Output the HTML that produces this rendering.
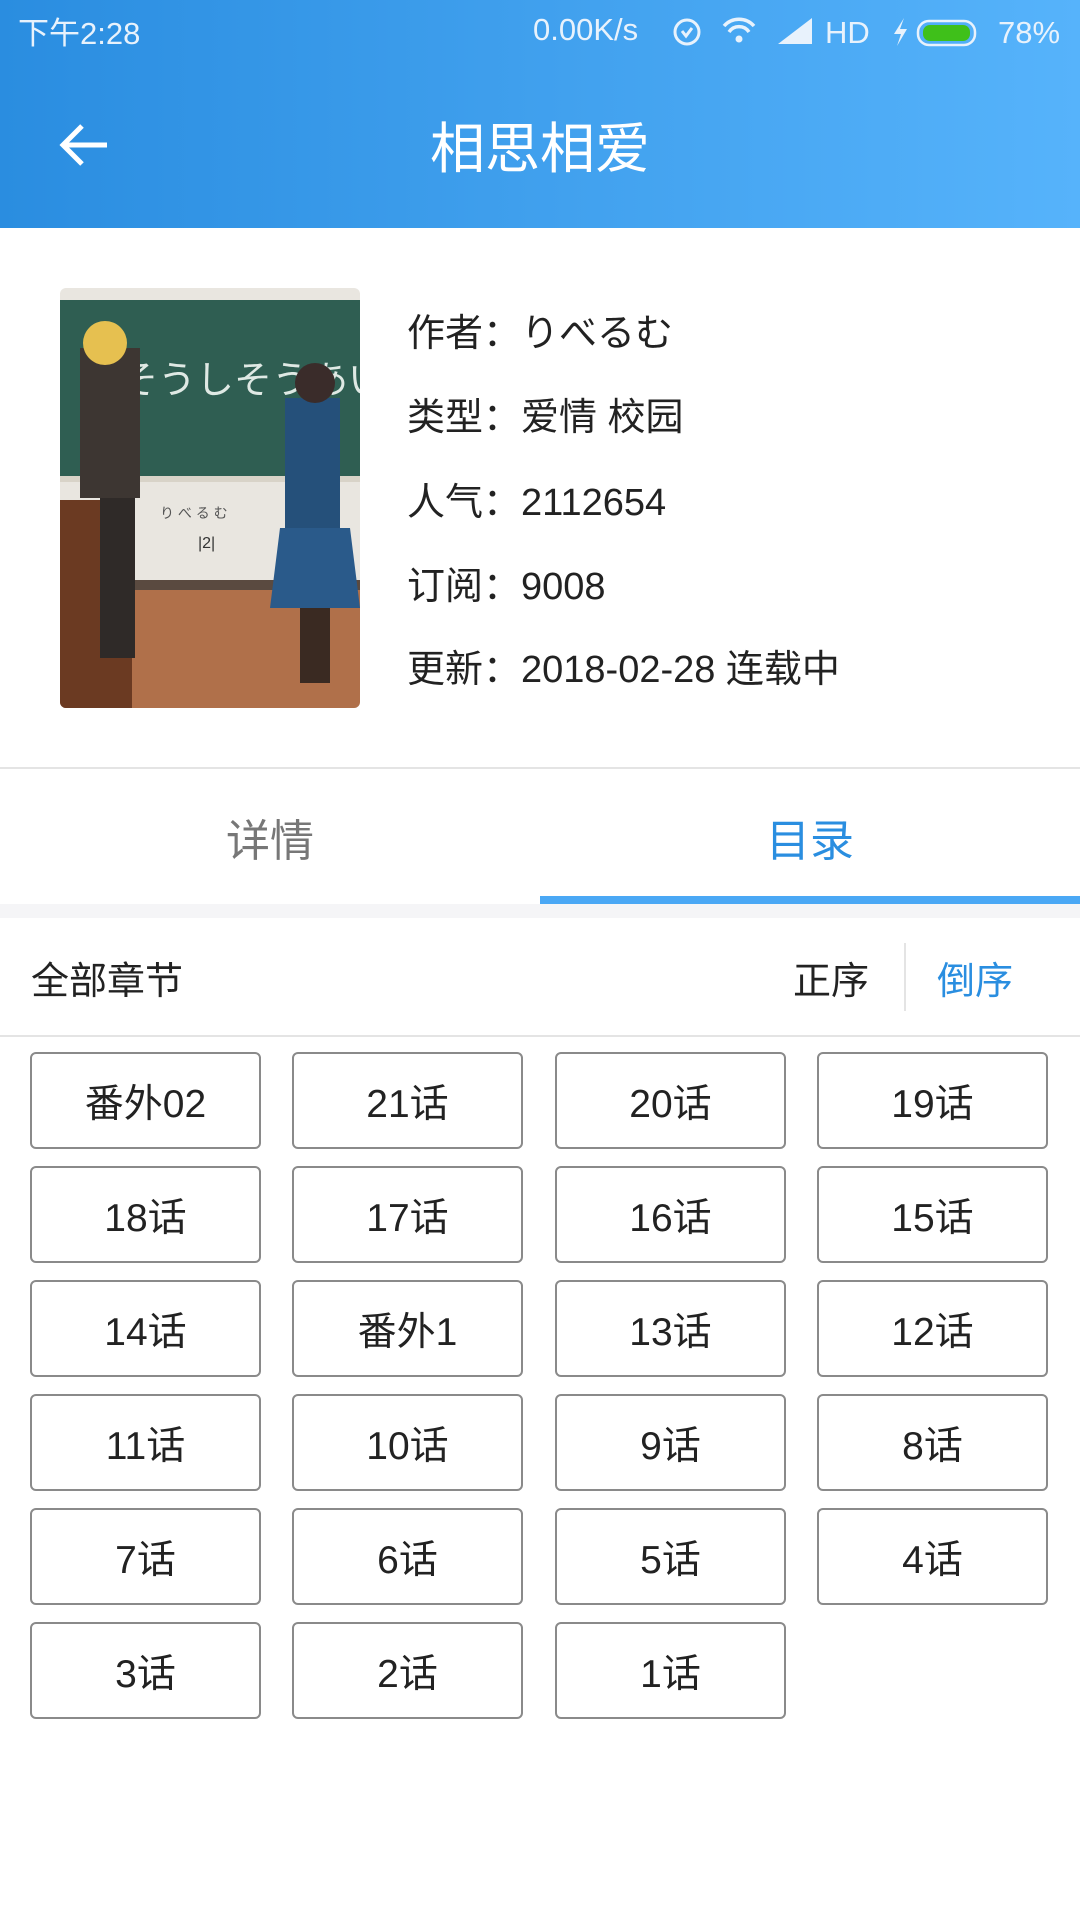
<!DOCTYPE html>
<html><head><meta charset="utf-8"><style>
*{margin:0;padding:0;box-sizing:border-box}
body{width:1080px;height:1920px;background:#fff;font-family:"Liberation Sans","Noto Sans CJK SC",sans-serif;position:relative;overflow:hidden;color:#222}
.hdr{position:absolute;left:0;top:0;width:1080px;height:228px;background:linear-gradient(90deg,#2a8de0,#56b3fb)}
.abs{position:absolute;white-space:nowrap}
.info{left:407px;font-size:38px;color:#222}
.btn{position:absolute;width:231px;height:97px;border:2px solid #8a8a8a;border-radius:6px;font-size:39px;display:flex;align-items:center;justify-content:center;color:#222}
</style></head><body>
<div class="hdr"></div>
<div class="abs" style="left:18px;top:8px;font-size:31px;color:#e8f2fc">下午2:28</div>
<div class="abs" style="left:533px;top:12px;font-size:31px;color:#e8f2fc">0.00K/s</div>
<svg class="abs" style="left:668px;top:12px" width="400" height="40" viewBox="0 0 400 40">
<circle cx="19" cy="20" r="12" fill="none" stroke="#e8f2fc" stroke-width="3"/><path d="M14 19l4 5 6-8" stroke="#e8f2fc" stroke-width="3" fill="none"/>
<path d="M56 14a20 20 0 0 1 30 0M61 20a12 12 0 0 1 20 0" stroke="#e8f2fc" stroke-width="3.5" fill="none"/><circle cx="71" cy="27" r="3.5" fill="#e8f2fc"/>
<path d="M110 32h34V6z" fill="#e8f2fc"/>
<text x="157" y="31" font-size="31" fill="#e8f2fc" font-family="Liberation Sans">HD</text>
<path d="M236 6l-10 16h7l-4 12 10-17h-7z" fill="#e8f2fc"/>
<rect x="250" y="9" width="57" height="24" rx="11" fill="none" stroke="#e8f2fc" stroke-width="2.5"/><rect x="255" y="13" width="47" height="16" rx="7" fill="#3fc01a"/>
<text x="330" y="31" font-size="31" fill="#e8f2fc" font-family="Liberation Sans">78%</text>
</svg>
<svg class="abs" style="left:58px;top:122px" width="52" height="46" viewBox="0 0 52 46"><path d="M24 4L5 23l19 19M5 23h44" stroke="#fff" stroke-width="5" fill="none"/></svg>
<div class="abs" style="left:0;width:1080px;text-align:center;top:104px;font-size:55px;color:#fff">相思相爱</div>

<svg class="abs" style="left:60px;top:288px;border-radius:6px" width="300" height="420" viewBox="0 0 300 420">
<rect width="300" height="420" fill="#e9e6e0"/>
<rect x="0" y="12" width="300" height="178" fill="#2f5e52"/>
<rect x="0" y="188" width="300" height="6" fill="#d8d3c8"/>
<rect x="0" y="300" width="300" height="120" fill="#b0704a"/>
<rect x="0" y="292" width="300" height="10" fill="#5a4a40"/>
<text x="60" y="105" font-size="38" fill="#dfe9e4" font-family="Noto Sans CJK JP">そうしそうあい</text>
<rect x="0" y="212" width="72" height="208" fill="#6b3a22"/>
<rect x="20" y="60" width="60" height="150" fill="#3d3632"/>
<rect x="40" y="210" width="35" height="160" fill="#2f2a28"/>
<circle cx="45" cy="55" r="22" fill="#e6c050"/>
<rect x="225" y="110" width="55" height="140" fill="#25507a"/>
<path d="M220 240h70l10 80h-90z" fill="#2a5a8a"/>
<circle cx="255" cy="95" r="20" fill="#3a2c2a"/>
<rect x="240" y="320" width="30" height="75" fill="#3a2a22"/>
<text x="100" y="230" font-size="14" fill="#555">り べ る む</text>
<text x="138" y="260" font-size="16" fill="#333">|2|</text>
</svg>

<div class="abs info" style="top:302px">作者：りべるむ</div>
<div class="abs info" style="top:386px">类型：爱情 校园</div>
<div class="abs info" style="top:471px">人气：2112654</div>
<div class="abs info" style="top:555px">订阅：9008</div>
<div class="abs info" style="top:638px">更新：2018-02-28 连载中</div>

<div class="abs" style="left:0;top:767px;width:1080px;height:2px;background:#e4e4e4"></div>
<div class="abs" style="left:0;width:540px;text-align:center;top:805px;font-size:44px;color:#777">详情</div>
<div class="abs" style="left:540px;width:540px;text-align:center;top:805px;font-size:44px;color:#2a8ee0">目录</div>
<div class="abs" style="left:540px;top:896px;width:540px;height:8px;background:#4aa8f5"></div>
<div class="abs" style="left:0;top:904px;width:1080px;height:14px;background:#f5f5f7"></div>

<div class="abs" style="left:31px;top:950px;font-size:38px">全部章节</div>
<div class="abs" style="left:793px;top:950px;font-size:38px">正序</div>
<div class="abs" style="left:904px;top:943px;width:2px;height:68px;background:#e4e4e4"></div>
<div class="abs" style="left:937px;top:950px;font-size:38px;color:#2a8ee0">倒序</div>
<div class="abs" style="left:0;top:1035px;width:1080px;height:2px;background:#e4e4e4"></div>

<div class="btn" style="left:30px;top:1052px">番外02</div>
<div class="btn" style="left:292px;top:1052px">21话</div>
<div class="btn" style="left:555px;top:1052px">20话</div>
<div class="btn" style="left:817px;top:1052px">19话</div>
<div class="btn" style="left:30px;top:1166px">18话</div>
<div class="btn" style="left:292px;top:1166px">17话</div>
<div class="btn" style="left:555px;top:1166px">16话</div>
<div class="btn" style="left:817px;top:1166px">15话</div>
<div class="btn" style="left:30px;top:1280px">14话</div>
<div class="btn" style="left:292px;top:1280px">番外1</div>
<div class="btn" style="left:555px;top:1280px">13话</div>
<div class="btn" style="left:817px;top:1280px">12话</div>
<div class="btn" style="left:30px;top:1394px">11话</div>
<div class="btn" style="left:292px;top:1394px">10话</div>
<div class="btn" style="left:555px;top:1394px">9话</div>
<div class="btn" style="left:817px;top:1394px">8话</div>
<div class="btn" style="left:30px;top:1508px">7话</div>
<div class="btn" style="left:292px;top:1508px">6话</div>
<div class="btn" style="left:555px;top:1508px">5话</div>
<div class="btn" style="left:817px;top:1508px">4话</div>
<div class="btn" style="left:30px;top:1622px">3话</div>
<div class="btn" style="left:292px;top:1622px">2话</div>
<div class="btn" style="left:555px;top:1622px">1话</div>
</body></html>
